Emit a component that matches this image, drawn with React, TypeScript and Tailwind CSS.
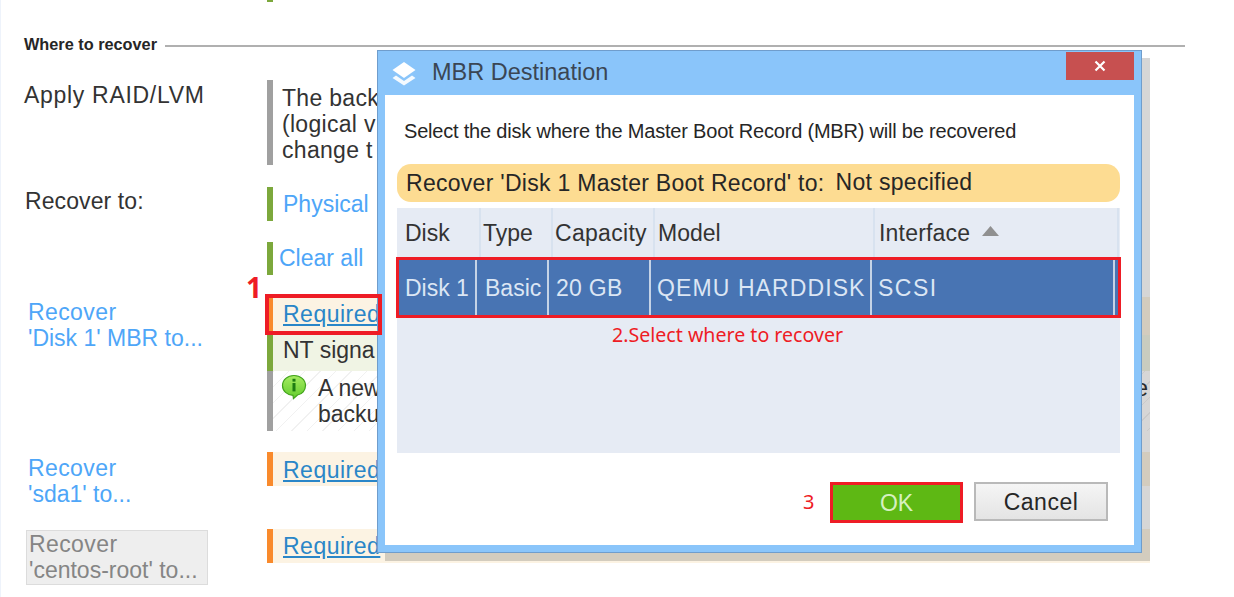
const linkRed = "text-[#ee1c25] font-['Noto_Sans',sans-serif]";

const LayersIcon = () => (
  <svg width="24" height="24" viewBox="0 0 24 24" className="shrink-0">
    <path d="M12 0 L23.5 8 L12 16 L0.5 8 Z" fill="#fff" />
    <path d="M4 13.5 L12 19 L20 13.5 L23.5 16 L12 23.5 L0.5 16 Z" fill="#fff" opacity="0.9" />
  </svg>
);

const InfoIcon = () => (
  <svg width="26" height="26" viewBox="0 0 26 26" className="shrink-0">
    <defs>
      <linearGradient id="infoFill" x1="0" y1="0" x2="0" y2="1">
        <stop offset="0" stopColor="#a6ec62" />
        <stop offset="1" stopColor="#62cc2c" />
      </linearGradient>
    </defs>
    <path
      d="M13 1.5 C19.5 1.5 24.5 5.8 24.5 11.5 C24.5 16.5 21 20.2 16.5 21 L12.5 24.5 L12 21.3 C6 21 1.5 17 1.5 11.5 C1.5 5.8 6.5 1.5 13 1.5 Z"
      fill="url(#infoFill)"
      stroke="#42a31c"
      strokeWidth="1.2"
    />
    <rect x="11.5" y="4.8" width="3" height="2.8" fill="#1d7d12" />
    <rect x="11.5" y="9" width="3" height="8.4" fill="#1d7d12" />
  </svg>
);

const Required = () => (
  <a className="text-[#2a86c8] underline underline-offset-2 tracking-[0.5px]">Required</a>
);

const Row = ({
  label,
  bar,
  top,
  bg,
  children,
}: {
  label: React.ReactNode;
  bar: string;
  top: string;
  bg?: string;
  children: React.ReactNode;
}) => (
  <div className={`flex items-start ${top}`}>
    <div className="w-[243px] shrink-0">{label}</div>
    <div className={`w-[883px] shrink-0 border-l-[6px] ${bar} ${bg ?? ""}`}>{children}</div>
  </div>
);

const Dialog = () => (
  <div className="absolute left-[376px] top-[50px] flex h-[503px] w-[765px] flex-col border border-[#6f9dcc] bg-[#8ac5fa] shadow-[8px_8px_0_rgba(0,0,0,0.16)]">
    <div className="flex h-[44px] shrink-0 items-start">
      <div className="ml-[14px] mt-[11px]">
        <LayersIcon />
      </div>
      <div className="ml-[16px] mt-[8px] text-[23.5px] leading-[26px] text-[#3a4654]">MBR Destination</div>
      <div className="ml-auto mr-[7px] mt-[1px] flex h-[28px] w-[68px] items-center justify-center bg-[#c75050]">
        <svg width="14" height="14" viewBox="0 0 14 14">
          <path d="M2.5 2.5 L11.5 11.5 M11.5 2.5 L2.5 11.5" stroke="#fff" strokeWidth="2.2" />
        </svg>
      </div>
    </div>

    <div className="mx-[7px] mb-[7px] flex-1 bg-white pl-[12px] pr-[14px]">
      <div className="whitespace-nowrap pl-[7px] pt-[23px] text-[20px] leading-[26px] tracking-[-0.2px] text-[#262626]">
        Select the disk where the Master Boot Record (MBR) will be recovered
      </div>

      <div className="mt-[20px] flex h-[38px] items-center rounded-[14px] bg-[#fddc92] pl-[9px] text-[23px] text-[#262626]">
        <span className="tracking-[0.28px]">Recover 'Disk 1 Master Boot Record' to:</span>
        <span className="ml-[11px] -translate-y-px tracking-[0.3px]">Not specified</span>
      </div>

      <div className="mt-[6px] h-[245px] bg-[#e6ebf4]">
        <div className="grid h-[49px] grid-cols-[84px_72px_102px_220px_244px_1fr] text-[23px] text-[#333]">
          <div className="flex items-center border-r-2 border-[#d8e2ef] pl-[8px]">Disk</div>
          <div className="flex items-center border-r-2 border-[#d8e2ef] pl-[2px]">Type</div>
          <div className="flex items-center border-r-2 border-[#d8e2ef] pl-[2px] tracking-[0.3px]">Capacity</div>
          <div className="flex items-center border-r-2 border-[#d8e2ef] pl-[3px]">Model</div>
          <div className="flex items-center border-r-2 border-[#d8e2ef] pl-[4px] tracking-[0.2px]">
            Interface
            <svg width="17" height="10" viewBox="0 0 17 10" className="ml-[12px] -translate-y-[2px]">
              <path d="M8.5 0 L17 10 L0 10 Z" fill="#909090" />
            </svg>
          </div>
          <div />
        </div>

        <div className="-mx-px grid h-[61px] grid-cols-[78px_72px_102px_221px_243px_1fr] border-[3px] border-[#ee1c25] bg-[#4874b3] text-[23px] text-[#dce6f4]">
          <div className="flex items-center whitespace-nowrap border-r-2 border-[#c5d3e6] pl-[6px]">Disk 1</div>
          <div className="flex items-center whitespace-nowrap border-r-2 border-[#c5d3e6] pl-[8px]">Basic</div>
          <div className="flex items-center whitespace-nowrap border-r-2 border-[#c5d3e6] pl-[7px] tracking-[0.3px]">20 GB</div>
          <div className="flex items-center whitespace-nowrap border-r-2 border-[#c5d3e6] pl-[6px] tracking-[1.1px]">QEMU HARDDISK</div>
          <div className="flex items-center whitespace-nowrap border-r-2 border-[#c5d3e6] pl-[6px] tracking-[1.5px]">SCSI</div>
          <div />
        </div>

        <div className={`pl-[215px] pt-[4px] text-[19.6px] leading-[26px] ${linkRed}`}>2.Select where to recover</div>
      </div>

      <div className="mt-[29px] flex items-start pl-[406px]">
        <span className={`mt-[7px] w-[27px] text-[20px] leading-[26px] ${linkRed}`}>3</span>
        <div className="flex h-[41px] w-[133px] items-center justify-center border-[3px] border-[#ee1c25] bg-[#5eb814] text-[23px] text-[#d6f0c0]">
          OK
        </div>
        <div className="ml-[11px] flex h-[39px] w-[134px] items-center justify-center border-2 border-[#b9b9b9] bg-gradient-to-b from-[#f5f5f5] to-[#e4e4e4] text-[23px] tracking-[0.5px] text-[#262626]">
          Cancel
        </div>
      </div>
    </div>
  </div>
);

export default function App() {
  return (
    <div className="relative h-[597px] w-[1234px] overflow-hidden border-l border-[#eef3fb] bg-white font-['Liberation_Sans',Arial,sans-serif] text-[23px] leading-[26px] text-[#333]">
      <div className="ml-[266px] h-[2px] w-[6px] bg-[#7ca83c]" />

      <div className="ml-[23px] mt-[34px] flex items-center">
        <span className="whitespace-nowrap text-[16.3px] font-bold leading-[16px] text-[#262626]">Where to recover</span>
        <div className="ml-[8px] mt-[4px] h-[2px] w-[1020px] bg-[#b0b0b0]" />
      </div>

      <div className="pl-[23px]">
        <Row top="mt-[28px]" bar="border-[#a0a0a0]" label={<div className="pt-[2px] tracking-[0.7px]">Apply RAID/LVM</div>}>
          <div className="h-[85px] pl-[9px] pt-[5px] tracking-[0.3px]">
            <div>The back</div>
            <div>(logical v</div>
            <div>change t</div>
          </div>
        </Row>

        <Row top="mt-[22px]" bar="border-[#7ca83c]" label={<div className="pl-[1px] pt-[1px] tracking-[0.1px]">Recover to:</div>}>
          <div className="h-[34px] pl-[10px] pt-[4px] text-[#4ea6f8]">Physical</div>
        </Row>

        <Row top="mt-[21px]" bar="border-[#7ca83c]" label={<div />}>
          <div className="h-[33px] pl-[6px] pt-[3px] text-[#4ea6f8]">Clear all</div>
        </Row>

        <div className="mt-[22px] flex items-start">
          <div className="w-[243px] shrink-0 pl-[4px] pt-[2px] text-[#4ea6f8]">
            <div className="tracking-[0.4px]">Recover</div>
            <div>'Disk 1' MBR to...</div>
          </div>
          <div className="w-[883px] shrink-0">
            <div className="h-[38px] border-l-[6px] border-[#f98a2c] bg-[#fcf3e3] pl-[10px] pt-[4px]">
              <Required />
            </div>
            <div className="h-[36px] border-l-[6px] border-[#7ca83c] bg-[#f0f4e4] pl-[10px] pt-[2px]">NT signa</div>
            <div className="flex h-[60px] border-l-[6px] border-[#a0a0a0] bg-[repeating-linear-gradient(135deg,#f1f1f1_0,#f1f1f1_1px,#fff_1px,#fff_11px)] pl-[8px] pt-[3px]">
              <InfoIcon />
              <div className="ml-[11px] flex-1 pr-[2px] pt-px">
                <div className="flex justify-between">
                  <span>A new</span>
                  <span>e</span>
                </div>
                <div>backu</div>
              </div>
            </div>
          </div>
        </div>

        <Row
          top="mt-[21px]"
          bar="border-[#f98a2c]"
          bg="bg-[#fcf3e3]"
          label={
            <div className="pl-[4px] pt-[3px] text-[#4ea6f8]">
              <div className="tracking-[0.4px]">Recover</div>
              <div>'sda1' to...</div>
            </div>
          }
        >
          <div className="h-[34px] pl-[10px] pt-[5px]">
            <Required />
          </div>
        </Row>

        <Row
          top="mt-[22px]"
          bar="border-[#f98a2c]"
          bg="bg-[#fcf3e3]"
          label={
            <div className="ml-[2px] mt-px h-[55px] w-[182px] border border-[#dcdcdc] bg-[#eeeeee] pl-[2px] text-[#858585]">
              <div className="tracking-[0.4px]">Recover</div>
              <div>'centos-root' to...</div>
            </div>
          }
        >
          <div className="h-[34px] pl-[10px] pt-[4px]">
            <Required />
          </div>
        </Row>
      </div>

      <Dialog />

      <div className="absolute left-[264px] top-[294px] h-[41px] w-[117px] border-[4px] border-[#ee1c25]" />
      <span className="absolute left-[245px] top-[268px] font-['Noto_Sans',sans-serif] text-[28px] font-bold leading-[38px] text-[#ee1c25]">
        1
      </span>
    </div>
  );
}
